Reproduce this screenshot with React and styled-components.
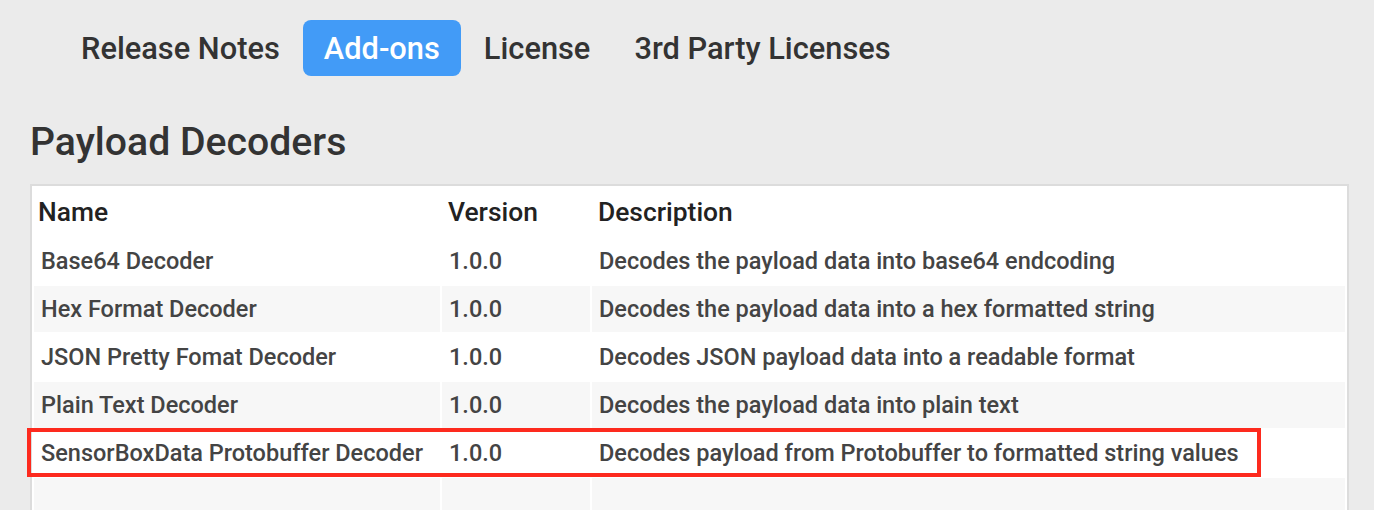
import styled, { createGlobalStyle } from "styled-components";

const GlobalStyle = createGlobalStyle`
  html, body {
    margin: 0;
    padding: 0;
    background: #ebebeb;
    font-family: Roboto, "Liberation Sans", sans-serif;
    color: #333;
  }
`;

const tabs = ["Release Notes", "Add-ons", "License", "3rd Party Licenses"];

const decoders = [
  { name: "Base64 Decoder", version: "1.0.0", desc: "Decodes the payload data into base64 endcoding" },
  { name: "Hex Format Decoder", version: "1.0.0", desc: "Decodes the payload data into a hex formatted string" },
  { name: "JSON Pretty Fomat Decoder", version: "1.0.0", desc: "Decodes JSON payload data into a readable format" },
  { name: "Plain Text Decoder", version: "1.0.0", desc: "Decodes the payload data into plain text" },
  { name: "SensorBoxData Protobuffer Decoder", version: "1.0.0", desc: "Decodes payload from Protobuffer to formatted string values" },
];

const App = () => {
  return (
    <Page>
      <GlobalStyle />
      <TabBar>
        {tabs.map((t) => (
          <Tab key={t} active={t === "Add-ons"}>{t}</Tab>
        ))}
      </TabBar>

      <Heading>Payload Decoders</Heading>

      <TableWrap>
        <Table>
          <colgroup>
            <col style={{ width: 406 }} />
            <col style={{ width: 148 }} />
            <col />
          </colgroup>
          <thead>
            <tr>
              <Th>Name</Th>
              <Th>Version</Th>
              <Th>Description</Th>
            </tr>
          </thead>
          <tbody>
            {decoders.map((d, i) => (
              <Row key={d.name} striped={i % 2 === 1}>
                <Td>{d.name}</Td>
                <Td>{d.version}</Td>
                <Td>{d.desc}</Td>
              </Row>
            ))}
            <Row striped>
              <Td />
              <Td />
              <Td />
            </Row>
          </tbody>
        </Table>
        {/* annotation box around the protobuffer row */}
        <Highlight />
      </TableWrap>
    </Page>
  );
};

export default App;

const Page = styled.div`
  padding: 20px 25px 0 30px;
  height: 510px;
  box-sizing: border-box;
  overflow: hidden;
`;

const TabBar = styled.nav`
  display: flex;
  gap: 2px;
  padding-left: 30px;
`;

const Tab = styled.div`
  height: 56px;
  display: flex;
  align-items: center;
  padding: 0 21px;
  border-radius: 8px;
  font-size: 30.8px;
  font-weight: 500;
  color: ${(p) => (p.active ? "#ffffff" : "#333333")};
  background: ${(p) => (p.active ? "#429bf7" : "transparent")};
`;

const Heading = styled.h1`
  margin: 44px 0 0 0;
  font-size: 39.2px;
  font-weight: 500;
  color: #333;
  line-height: 44px;
`;

const TableWrap = styled.div`
  position: relative;
  margin-top: 20px;
`;

const Table = styled.table`
  width: 100%;
  background: #fff;
  border: 2px solid #dcdcdc;
  border-spacing: 2px;
  table-layout: fixed;
`;

const Th = styled.th`
  height: 48px;
  padding: 0 4px;
  text-align: left;
  font-size: 26.4px;
  font-weight: 500;
  color: #222;
  box-sizing: border-box;

  & + & {
    padding-left: 6px;
  }
`;

const Row = styled.tr`
  td {
    background: ${(p) => (p.striped ? "#f7f7f7" : "#ffffff")};
  }
`;

const Td = styled.td`
  height: 46px;
  padding: 0 7px;
  font-size: 23.5px;
  font-weight: 500;
  color: #444;
  white-space: nowrap;
  box-sizing: border-box;
`;

const Highlight = styled.div`
  position: absolute;
  left: -3px;
  top: 244px;
  width: 1234px;
  height: 49px;
  border: 4px solid #fd2a1e;
  box-sizing: border-box;
  pointer-events: none;
`;
